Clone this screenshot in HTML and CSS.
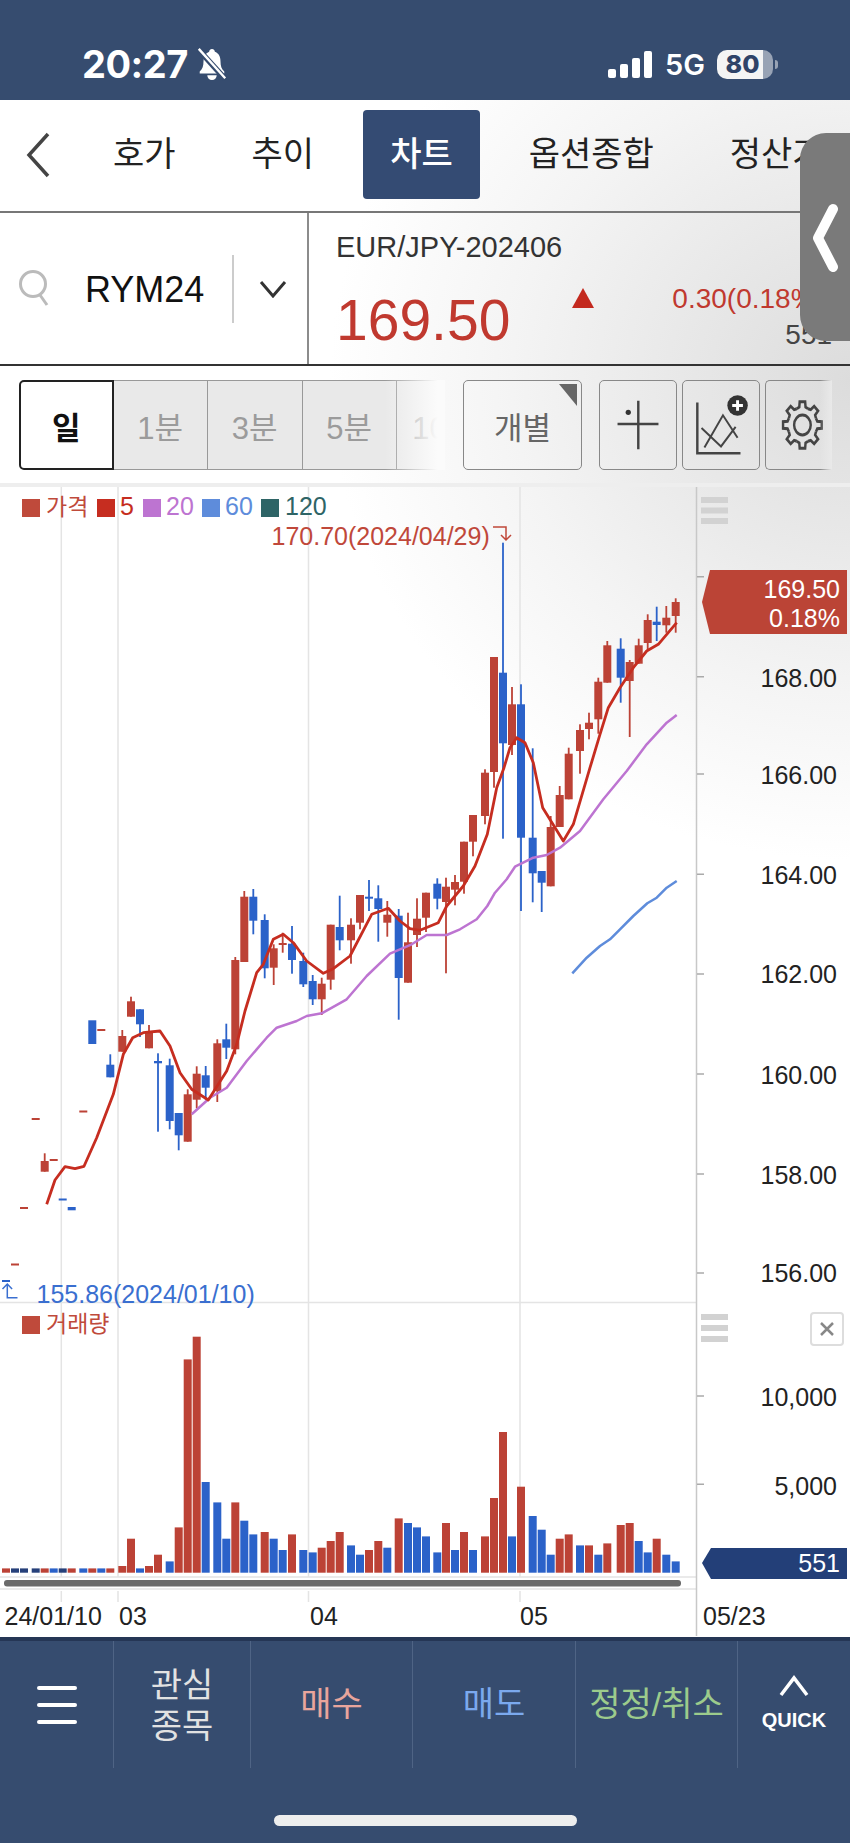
FILE: index.html
```html
<!DOCTYPE html>
<html lang="ko">
    <head>
        <meta charset="UTF-8">
        <meta name="viewport" content="width=device-width, initial-scale=1.0">
        <title>RYM24 차트</title>
        <link rel="stylesheet" href="styles.css">
    </head>
    <body>
        <header class="status">
            <span class="clock">20:27</span>
            <svg class="bell" viewBox="0 0 30 36">
                <path d="M15 2c-2 0-3 1.500-3 3-4 1.500-6 5-6 10 0 5-1 8-4 11v2h26v-2c-3-3-4-6-4-11 0-5-2-8.500-6-10 0-1.500-1-3-3-3zM10 30a5 5 0 0 0 10 0z" fill="#fff"/>
                <path d="M1 3l28 31" stroke="#364c6f" stroke-width="6"/>
                <path d="M1 2l28 31" stroke="#fff" stroke-width="2.500"/>
            </svg>
            <span class="status-right">
                <span class="signal"><i></i><i></i><i></i><i></i></span>
                <span class="net">5G</span>
                <span class="battery"><b>80</b></span>
                <span class="battery-cap"></span>
            </span>
        </header>

        <main class="screen">
            <nav class="tabs">
                <svg class="back" viewBox="0 0 26 48"><path d="M23 3L4 24l19 21" /></svg>
                <a class="tab">호가</a>
                <a class="tab">추이</a>
                <a class="tab tab-on">차트</a>
                <a class="tab">옵션종합</a>
                <a class="tab">정산가</a>
            </nav>

            <section class="quote">
                <div class="symbol">
                    <svg class="search" viewBox="0 0 32 40">
                        <circle cx="15" cy="15" r="12.500"/>
                        <path d="M22 26l7 10"/>
                    </svg>
                    <span class="code">RYM24</span>
                    <span class="symbol-sep"></span>
                    <svg class="caret" viewBox="0 0 28 18"><path d="M2 2l12 14L26 2"/></svg>
                </div>
                <div class="info">
                    <div class="name">EUR/JPY-202406</div>
                    <div class="price-row">
                        <span class="price">169.50</span>
                        <span class="up"></span>
                        <div class="change">
                            <span class="rate">0.30(0.18%)</span>
                            <span class="volume">551</span>
                        </div>
                    </div>
                </div>
            </section>

            <section class="tools">
                <div class="periods">
                    <button class="period period-on">일</button>
                    <button class="period">1분</button>
                    <button class="period">3분</button>
                    <button class="period">5분</button>
                    <button class="period">10분</button>
                </div>
                <button class="tool tool-each">개별</button>
                <div class="tool-icons">
                    <button class="tool tool-icon">
                        <svg viewBox="0 0 78 90">
                            <path d="M18 44h42M39.300 20v50"/>
                            <circle class="solid" cx="29" cy="32" r="2.700"/>
                        </svg>
                    </button>
                    <button class="tool tool-icon">
                        <svg viewBox="0 0 78 90">
                            <path d="M14.700 22v52H59"/>
                            <path class="thin" d="M19 48l20 19 15-20M22 68l19-33 15 23"/>
                            <circle class="solid" cx="56" cy="25" r="10.500"/>
                            <path class="plus" d="M50.500 25h11M56 19.500v11"/>
                        </svg>
                    </button>
                    <button class="tool tool-icon tool-gear">
                        <svg viewBox="-37 -45 67 90">
                            <defs>
                                <path id="tooth" d="M-5.740-13.860L-3.200-15.200-2.800-19.800H2.800L3.200-15.200 5.740-13.860"/>
                            </defs>
                            <g transform="scale(1 1.200)">
                                <use href="#tooth"/>
                                <use href="#tooth" transform="rotate(45)"/>
                                <use href="#tooth" transform="rotate(90)"/>
                                <use href="#tooth" transform="rotate(135)"/>
                                <use href="#tooth" transform="rotate(180)"/>
                                <use href="#tooth" transform="rotate(225)"/>
                                <use href="#tooth" transform="rotate(270)"/>
                                <use href="#tooth" transform="rotate(315)"/>
                                <circle r="8.500"/>
                            </g>
                        </svg>
                    </button>
                </div>
            </section>

            <!-- viewBox keeps page coordinates, so marks below use the same y as the axis -->
            <svg class="chart" id="chart" viewBox="0 486 850 1151">
                <g class="grid">
                    <path d="M61.300 486V1576M118 486V1576M308.500 486V1576M520 486V1576"/>
                    <path d="M61.300 1590V1601M118 1590V1601M308.500 1590V1601M520 1590V1601"/>
                    <path d="M0 1301.500H696M0 1576H696M0 1588H696"/>
                </g>
                <path class="axis" d="M696.500 486V1635"/>
                <path class="ticks" d="M697 575.700h7M697 675.700h7M697 773h7M697 873.300h7M697 973h7M697 1073h7M697 1173h7M697 1272h7M697 1395h7M697 1483.300h7"/>

                <g class="panel-lines">
                    <rect x="701" y="496" width="27" height="6"/>
                    <rect x="701" y="506.500" width="27" height="6"/>
                    <rect x="701" y="517" width="27" height="6"/>
                    <rect x="701" y="1313" width="27" height="6"/>
                    <rect x="701" y="1324" width="27" height="6"/>
                    <rect x="701" y="1335" width="27" height="6"/>
                </g>
                <rect class="close-box" x="811" y="1312" width="32" height="32" rx="3"/>
                <path class="close-x" d="M821 1322l12 12M833 1322l-12 12"/>

                <g id="marks"></g>

                <g class="legend">
                    <rect x="22" y="498" width="18" height="18" fill="#bf4a3b"/>
                    <text class="hangul" x="46" y="514" fill="#bf4a3b">가격</text>
                    <rect x="97" y="498" width="18" height="18" fill="#c62d20"/>
                    <text x="120" y="514" fill="#c62d20">5</text>
                    <rect x="143" y="498" width="18" height="18" fill="#bd74d1"/>
                    <text x="166" y="514" fill="#bd74d1">20</text>
                    <rect x="202" y="498" width="18" height="18" fill="#5e8cdb"/>
                    <text x="225" y="514" fill="#5e8cdb">60</text>
                    <rect x="261" y="498" width="18" height="18" fill="#2e6466"/>
                    <text x="285" y="514" fill="#2e6466">120</text>
                    <rect x="22" y="1315" width="18" height="18" fill="#bf4a3b"/>
                    <text class="hangul" x="46" y="1331" fill="#bf4a3b">거래량</text>
                </g>

                <text class="mark-high" x="271.500" y="544">170.70(2024/04/29)</text>
                <path class="arrow-high" d="M493 526h13v13M501 534l5 5 5-5"/>
                <text class="mark-low" x="36.500" y="1302">155.86(2024/01/10)</text>
                <path class="arrow-low" d="M17.500 1296.700H7.300V1283M2.500 1288l4.800-5 4.800 5"/>

                <polygon class="tag-price" points="702,601 710,569 847,569 847,633 710,633"/>
                <text class="tag-text" x="840" y="597">169.50</text>
                <text class="tag-text" x="840" y="626">0.18%</text>
                <polygon class="tag-volume" points="702,1562 711,1547 847,1547 847,1578 711,1578"/>
                <text class="tag-text" x="840" y="1571">551</text>

                <g class="scale">
                    <text x="837" y="685.500">168.00</text>
                    <text x="837" y="782.500">166.00</text>
                    <text x="837" y="882.500">164.00</text>
                    <text x="837" y="982">162.00</text>
                    <text x="837" y="1083">160.00</text>
                    <text x="837" y="1183">158.00</text>
                    <text x="837" y="1281">156.00</text>
                    <text x="837" y="1405">10,000</text>
                    <text x="837" y="1494">5,000</text>
                </g>
                <g class="dates">
                    <text x="4.500" y="1624">24/01/10</text>
                    <text x="119" y="1624">03</text>
                    <text x="310" y="1624">04</text>
                    <text x="520" y="1624">05</text>
                    <text x="703" y="1624">05/23</text>
                </g>
            </svg>

            <div class="handle">
                <svg viewBox="0 0 50 208"><path d="M33 76L18 105l15 29"/></svg>
            </div>
        </main>

        <footer class="bottom">
            <nav class="actions">
                <a class="action action-menu"><i></i><i></i><i></i></a>
                <a class="action action-watch">관심<br>종목</a>
                <a class="action action-buy">매수</a>
                <a class="action action-sell">매도</a>
                <a class="action action-edit">정정/취소</a>
                <a class="action action-quick">
                    <svg viewBox="0 0 32 22"><path d="M3 20L16 3l13 17"/></svg>
                    <b>QUICK</b>
                </a>
            </nav>
            <div class="home-bar"></div>
        </footer>

        <script src="chart.js"></script>
    </body>
</html>
```

FILE: styles.css
```css
* {
    box-sizing: border-box;
}
body {
    background: #364c6f;
    font-family: "Liberation Sans", "Noto Sans CJK KR", sans-serif;
    height: 1843px;
    margin: 0;
    overflow: hidden;
    width: 850px;
}

/* status bar */
.status {
    align-items: center;
    background: #364c6f;
    color: white;
    display: flex;
    height: 100px;
    padding: 28px 72px 0 82px;
}
.clock {
    font-family: Inter, sans-serif;
    font-size: 38px;
    font-weight: 700;
    letter-spacing: -0.5px;
}
.bell {
    height: 34px;
    margin-left: 9px;
    width: 30px;
}
.status-right {
    align-items: center;
    display: flex;
    margin-left: auto;
}
.signal {
    align-items: flex-end;
    display: flex;
    gap: 4px;
    height: 27px;
}
.signal i {
    background: white;
    border-radius: 2px;
    width: 8px;
}
.signal i:nth-child(1) { height: 9px; }
.signal i:nth-child(2) { height: 14px; }
.signal i:nth-child(3) { height: 20px; }
.signal i:nth-child(4) { height: 27px; }
.net {
    font-family: Inter, sans-serif;
    font-size: 29px;
    font-weight: 600;
    margin-left: 13px;
}
.battery {
    background: linear-gradient(90deg, #f4f4f4 82%, #98a3b5 82%);
    border-radius: 10px;
    color: #2f4368;
    height: 29px;
    margin-left: 12px;
    text-align: center;
    width: 56px;
}
.battery b {
    display: block;
    font-family: Inter, sans-serif;
    font-size: 25px;
    font-weight: 800;
    line-height: 29px;
    margin-right: 5px;
}
.battery-cap {
    background: #98a3b5;
    border-radius: 0 3px 3px 0;
    height: 9px;
    margin-left: 2px;
    width: 3px;
}

/* everything between the two navy bars sits on one light sheen */
.screen {
    background: radial-gradient(ellipse 520px 480px at 850px 280px, #dcdcdc, #f4f4f4 65%, #fff 100%);
    height: 1537px;
    position: relative;
}

.tabs {
    align-items: center;
    border-bottom: 2px solid #777;
    display: flex;
    gap: 22px;
    height: 113px;
    overflow: hidden;
    padding: 11px 0 13px 25px;
}
.back {
    fill: none;
    flex: none;
    height: 48px;
    margin-right: 13px;
    stroke: #444;
    stroke-width: 3.5;
    width: 26px;
}
.tab {
    color: #222;
    flex: none;
    font-size: 34px;
    line-height: 89px;
    padding: 0 27px;
    white-space: nowrap;
}
.tab-on {
    background: #344b73;
    border-radius: 4px;
    color: white;
    font-weight: 500;
}

.quote {
    border-bottom: 2px solid #333;
    display: flex;
    height: 153px;
}
.symbol {
    align-items: center;
    border-right: 2px solid #8c8c8c;
    display: flex;
    flex: none;
    padding-left: 18px;
    width: 309px;
}
.search {
    fill: none;
    height: 40px;
    stroke: #bbb;
    stroke-width: 3;
    width: 32px;
}
.code {
    color: #111;
    font-size: 36px;
    margin: 3px 0 0 35px;
}
.symbol-sep {
    background: #ccc;
    height: 68px;
    margin-left: 28px;
    width: 2px;
}
.caret {
    fill: none;
    height: 18px;
    margin-left: 25px;
    stroke: #333;
    stroke-width: 3;
    width: 28px;
}
.info {
    flex: 1;
    min-width: 0;
    overflow: hidden;
    padding: 14px 0 0 27px;
}
.name {
    color: #333;
    font-size: 29px;
    line-height: 40px;
}
.price-row {
    align-items: flex-start;
    display: flex;
}
.price {
    color: #c0392f;
    font-size: 57px;
    line-height: 64px;
    margin-top: 21px;
}
.up {
    border-bottom: 20px solid #c3291e;
    border-left: 11px solid transparent;
    border-right: 11px solid transparent;
    height: 0;
    margin: 21px 0 0 62px;
    width: 0;
}
.change {
    display: flex;
    flex-direction: column;
    margin-left: 78px;
    white-space: nowrap;
}
.rate {
    color: #c0392f;
    font-size: 28px;
    line-height: 36px;
    margin-top: 14px;
}
.volume {
    color: #444;
    font-size: 28px;
    line-height: 36px;
    margin-left: 113px;
}

.tools {
    align-items: flex-start;
    border-bottom: 4px solid #eee;
    display: flex;
    height: 121px;
    padding: 14px 0 0 19px;
}
.periods {
    display: flex;
    flex: none;
    height: 90px;
    overflow: hidden;
    position: relative;
    width: 426px;
}
.periods::after {
    background: linear-gradient(90deg, rgba(255, 255, 255, 0), #fbfbfb 88%);
    bottom: 0;
    content: "";
    position: absolute;
    right: 0;
    top: 0;
    width: 60px;
}
.period {
    background: #e9e9e9;
    border: 1px solid #999;
    border-left: 0;
    color: #9b9b9b;
    flex: none;
    font-family: inherit;
    font-size: 31px;
    padding: 0;
    width: 94.500px;
}
.period-on {
    background: white;
    border: 2px solid #222;
    border-radius: 5px 0 0 5px;
    color: #111;
    font-weight: 700;
}
.tool {
    background: transparent;
    border: 1.500px solid #888;
    border-radius: 5px;
    font-family: inherit;
    height: 90px;
    padding: 0;
}
.tool-each {
    color: #666;
    flex: none;
    font-size: 31px;
    margin-left: 18px;
    position: relative;
    width: 119px;
}
.tool-each::after {
    border-left: 18px solid transparent;
    border-top: 22px solid #666;
    content: "";
    position: absolute;
    right: 4px;
    top: 3px;
}
.tool-icons {
    display: flex;
    flex: none;
    gap: 5px;
    margin-left: 17px;
    position: relative;
}
.tool-icon {
    width: 78px;
}
.tool-gear {
    border-right: 0;
    border-radius: 5px 0 0 5px;
    width: 67px;
}
.tool-icons::after {
    background: linear-gradient(90deg, rgba(232, 232, 232, 0), #e9e9e9);
    bottom: 0;
    content: "";
    position: absolute;
    right: 0;
    top: 0;
    width: 12px;
}
.tool-icon svg {
    display: block;
    fill: none;
    height: 100%;
    stroke: #444;
    stroke-width: 2.500;
    width: 100%;
}
.tool-icon .thin {
    stroke-width: 2;
}
.tool-icon .solid {
    fill: #333;
    stroke: none;
}
.tool-icon .plus {
    stroke: white;
    stroke-width: 3;
}

/* chart */
.chart {
    display: block;
    font-size: 25px;
    height: 1151px;
    width: 850px;
}
.grid path {
    fill: none;
    stroke: #e4e4e4;
    stroke-width: 1.500;
}
.axis {
    stroke: #c8c8c8;
    stroke-width: 1.500;
}
.ticks {
    stroke: #aaa;
    stroke-width: 1.500;
}
.panel-lines rect {
    fill: #d2d2d2;
}
.close-box {
    fill: white;
    stroke: #ddd;
    stroke-width: 2;
}
.close-x {
    stroke: #888;
    stroke-width: 2.500;
}
.legend .hangul {
    font-size: 23px;
}
.mark-high {
    fill: #c0483a;
}
.arrow-high {
    fill: none;
    stroke: #c0483a;
    stroke-width: 1.500;
}
.mark-low {
    fill: #3a6fd0;
}
.arrow-low {
    fill: none;
    stroke: #3a6fd0;
    stroke-width: 1.500;
}
.tag-price {
    fill: #bb4436;
}
.tag-volume {
    fill: #233f78;
}
.tag-text {
    fill: white;
    text-anchor: end;
}
.scale text {
    fill: #222;
    text-anchor: end;
}
.dates text {
    fill: #222;
}
.scroll-thumb {
    fill: #6a6a6a;
}
.line {
    fill: none;
    stroke-linejoin: round;
}
.line-5 {
    stroke: #c62d20;
    stroke-width: 2.800;
}
.line-20 {
    stroke: #bd74d1;
    stroke-width: 2.500;
}
.line-60 {
    stroke: #5e8cdb;
    stroke-width: 2.500;
}

/* side drawer tab, it lies over the quote row */
.handle {
    background: #7a7a7a;
    border-radius: 26px 0 0 26px;
    height: 208px;
    position: absolute;
    right: 0;
    top: 33px;
    width: 50px;
}
.handle svg {
    display: block;
    fill: none;
    height: 208px;
    stroke: white;
    stroke-linecap: round;
    stroke-linejoin: round;
    stroke-width: 10;
    width: 50px;
}

/* bottom bar */
.bottom {
    background: #364c6f;
    border-top: 4px solid #253655;
    height: 206px;
}
.actions {
    display: grid;
    grid-template-columns: 113px 137px 162px 163px 162px 113px;
    height: 127px;
}
.action {
    align-items: center;
    border-left: 1px solid #4f6485;
    display: flex;
    flex-direction: column;
    font-size: 34px;
    justify-content: center;
    line-height: 41px;
    text-align: center;
}
.action-menu {
    border-left: 0;
    gap: 13px;
}
.action-menu i {
    background: white;
    border-radius: 2px;
    height: 4px;
    width: 40px;
}
.action-watch {
    color: #e2e2e2;
    display: block;
    padding: 24px 0 0;
}
.action-buy { color: #e8a59c; }
.action-sell { color: #7ba9ee; }
.action-edit { color: #9ccb8c; }
.action-quick {
    color: white;
}
.action-quick svg {
    fill: none;
    height: 22px;
    stroke: white;
    stroke-width: 3.500;
    width: 32px;
}
.action-quick b {
    font-size: 20px;
    line-height: 28px;
    margin-top: 9px;
}
.home-bar {
    background: #eee;
    border-radius: 6px;
    height: 11px;
    margin: 47px 0 0 274px;
    width: 303px;
}
```

FILE: chart.js
```js
// x, candle colour, body top, body bottom, wick top, wick bottom (0 = no wick on that side),
// volume bar colour, volume bar height. All in page pixels.
const bars = [
    [2, "b", 1279, 1281, 0, 0, "r", 4.3],
    [11, "r", 1262.5, 1264.5, 0, 0, "n", 4.3],
    [20, "r", 1206, 1208, 0, 0, "n", 4.3],
    [31.7, "r", 1117, 1119, 0, 0, "n", 4.3],
    [40.7, "r", 1160, 1170.7, 1152.3, 0, "r", 4.3],
    [49.7, "r", 1158, 1160, 0, 0, "b", 4.3],
    [58.7, "b", 1197.5, 1199.5, 0, 0, "n", 4.3],
    [67.7, "b", 1206, 1209.3, 0, 0, "r", 4.3],
    [79.3, "r", 1109.5, 1111.5, 0, 0, "b", 4.3],
    [88.3, "b", 1019.3, 1043, 0, 0, "r", 4.3],
    [97.3, "r", 1028, 1030, 0, 0, "b", 4.3],
    [106.3, "b", 1063.7, 1076.3, 1053.3, 0, "r", 4.3],
    [118.3, "r", 1035, 1050.7, 1029, 0, "r", 6.7],
    [127, "r", 1000.3, 1015.7, 995.7, 0, "r", 34],
    [136, "b", 1008.3, 1023.3, 0, 1036, "b", 4.3],
    [145, "r", 1031.7, 1047.3, 1024, 0, "r", 6.7],
    [154, "b", 1060, 1062.3, 1052.3, 1130.7, "r", 18],
    [165.7, "b", 1064.3, 1120, 1057.7, 1128.3, "b", 11.3],
    [174.7, "b", 1112, 1134.3, 0, 1149.3, "r", 45.3],
    [183.7, "r", 1093.3, 1140.7, 1088.3, 0, "r", 213.3],
    [192.7, "r", 1072.7, 1098.7, 1065.3, 1107.3, "r", 236],
    [201.7, "b", 1074.3, 1086.7, 1065, 1098.7, "b", 90.7],
    [213.3, "r", 1042.3, 1090, 1038.3, 1101, "b", 70.3],
    [222.3, "b", 1038.3, 1046.7, 1022.7, 1058, "b", 34],
    [231.3, "r", 959, 1048.3, 956, 1053.3, "r", 70.3],
    [240.3, "r", 895.7, 961, 890, 0, "b", 52],
    [249.3, "b", 895.7, 919.7, 888, 933.3, "b", 38.3],
    [260.7, "b", 919, 967.3, 913.3, 977.3, "r", 40.7],
    [269.7, "r", 947.3, 966.7, 943.3, 984, "b", 34],
    [278.7, "r", 942, 944, 931.7, 951.7, "b", 22.7],
    [288, "b", 942.7, 959, 925, 972.7, "r", 38.3],
    [299.3, "b", 960, 983.3, 951.7, 986, "b", 22.7],
    [308.7, "b", 980, 998.3, 974, 1004, "b", 20.3],
    [317.7, "r", 982.7, 998.3, 976.7, 1014, "r", 25],
    [326.7, "r", 923.7, 978.7, 0, 988.7, "r", 31.7],
    [335.7, "b", 926, 939.3, 894.7, 949.3, "r", 40.7],
    [347, "r", 923.7, 939.3, 917.3, 962.7, "b", 27.3],
    [356, "r", 894, 921.7, 0, 928.3, "b", 18],
    [365, "b", 895.7, 897.7, 879, 910, "r", 22.7],
    [374.3, "b", 897.3, 908, 884.3, 940.7, "r", 31.7],
    [383.3, "r", 913.7, 921.7, 900, 935.7, "b", 25],
    [394.7, "b", 914.7, 977, 908, 1018.7, "r", 54.3],
    [404, "r", 941.3, 981.7, 911.7, 0, "b", 49.7],
    [413, "r", 917.7, 934, 897.3, 946, "b", 45.3],
    [422, "r", 891.7, 916.7, 0, 931, "b", 36.3],
    [433.3, "b", 882.7, 897.7, 877.3, 908.3, "b", 20.3],
    [442, "r", 885.7, 901, 876.7, 972.3, "r", 49.7],
    [451, "r", 881, 888.7, 874, 904.3, "b", 22.7],
    [460, "r", 840.7, 880.7, 0, 892.7, "r", 40.7],
    [469, "r", 814, 840.7, 0, 855.3, "b", 22.7],
    [481, "r", 771.7, 815, 768.3, 823.3, "r", 36.3],
    [490, "r", 656, 771, 0, 786.7, "r", 74.7],
    [499, "b", 671.7, 742.3, 541.7, 837.7, "r", 140.7],
    [508, "r", 703.3, 744, 686, 754, "b", 36.3],
    [517, "b", 703.3, 836.7, 683.3, 910, "r", 86],
    [528.7, "b", 836.7, 872.3, 747.3, 901.3, "b", 56.7],
    [537.7, "b", 870, 881.7, 0, 911, "b", 43],
    [546.7, "r", 826, 885.3, 815, 0, "b", 18],
    [555.7, "r", 794, 826, 785, 0, "r", 34],
    [564.7, "r", 752.7, 798.3, 746.7, 0, "r", 38.3],
    [576, "r", 729, 750, 723.3, 772.7, "b", 27.3],
    [585, "r", 721.7, 728, 711.7, 738.3, "r", 27.3],
    [594.3, "r", 680.7, 718.3, 676.7, 732.7, "b", 18],
    [603.3, "r", 644.3, 681.7, 640, 0, "r", 29.3],
    [616.7, "b", 647.7, 676.7, 637.3, 701.7, "r", 47.7],
    [625.7, "r", 661, 680, 659, 736, "r", 49.7],
    [634.7, "r", 644.3, 662.7, 637.7, 0, "b", 31.7],
    [643.7, "r", 619, 642, 613.3, 649.3, "b", 20.3],
    [652.7, "b", 620.7, 624, 605.7, 640, "r", 34],
    [662.3, "r", 616.7, 624.3, 605, 631.7, "b", 18],
    [671.7, "r", 601, 615, 597.3, 631.7, "b", 11.3],
];

const ma5 = "46.7,1203.3 55,1179 65,1165.7 75,1167.7 84,1165.3 96.7,1136.7 113.3,1093.3 123.3,1053.3 132.7,1036.7 143.3,1031.7 160,1030 170,1045 180,1071.7 191.7,1088.3 208.3,1099 226.7,1070 236.7,1043.3 245,1010 256.7,971.7 263.3,963.3 273.3,938.3 283.3,933.3 293.3,941.7 306.7,960 323.3,972.3 333.3,967.7 350,955 371.7,913.3 388.3,907.3 400,920 410,927.7 420,929.3 438.3,921.7 446.7,905 463.3,885 475,865 487.3,833.3 496.7,786.7 504,766.7 510,746.7 516.7,736.7 525,741.7 533.3,761.7 542.7,806.7 563.3,840 573.3,823.3 590,766.7 600,733.3 608.3,706.7 620,686.7 633.3,666.7 646.7,650 658.3,643.3 676.7,621.7";
const ma20 = "191.7,1113.3 210,1096.7 226.7,1086.7 246.7,1060 266.7,1036.7 276.7,1026.7 296.7,1020 306.7,1015 321.7,1012.3 346.7,998.3 366.7,975 390,952.7 411.7,943.3 426.7,934 446.7,934 460,928.3 476.7,918.3 487.3,905 495,891.7 506.7,878.3 515,865.7 533.3,856.7 546.7,854 560,846.7 580,830 603.3,798.3 626.7,770 646.7,743.3 666.7,721.7 676.7,714";
const ma60 = "572.3,972.3 586.7,956.7 600,945 610,938.3 620,928.3 633.3,915 647.3,902.3 656.7,896.7 666.7,886.7 676.7,880";

const colours = { r: "#bc4236", b: "#2b62c9", n: "#26407a" };
const volumeBase = 1571.7;
const marks = document.getElementById("marks");

function add(tag, attrs) {
    const el = document.createElementNS("http://www.w3.org/2000/svg", tag);
    for (const key in attrs) el.setAttribute(key, attrs[key]);
    marks.appendChild(el);
}

bars.forEach(function([x, colour, top, bottom, wickTop, wickBottom, volColour, volHeight]) {
    const fill = colours[colour];
    if (wickTop || wickBottom) {
        add("rect", { x: x + 3.1, y: wickTop || top, width: 1.8, height: (wickBottom || bottom) - (wickTop || top), fill });
    }
    add("rect", { x, y: top, width: 8, height: bottom - top, fill });
    add("rect", { x, y: volumeBase - volHeight, width: 8, height: volHeight, fill: colours[volColour] });
});

add("polyline", { class: "line line-60", points: ma60 });
add("polyline", { class: "line line-20", points: ma20 });
add("polyline", { class: "line line-5", points: ma5 });
add("rect", { class: "scroll-thumb", x: 4, y: 1579, width: 677, height: 6.5, rx: 3 });
```
